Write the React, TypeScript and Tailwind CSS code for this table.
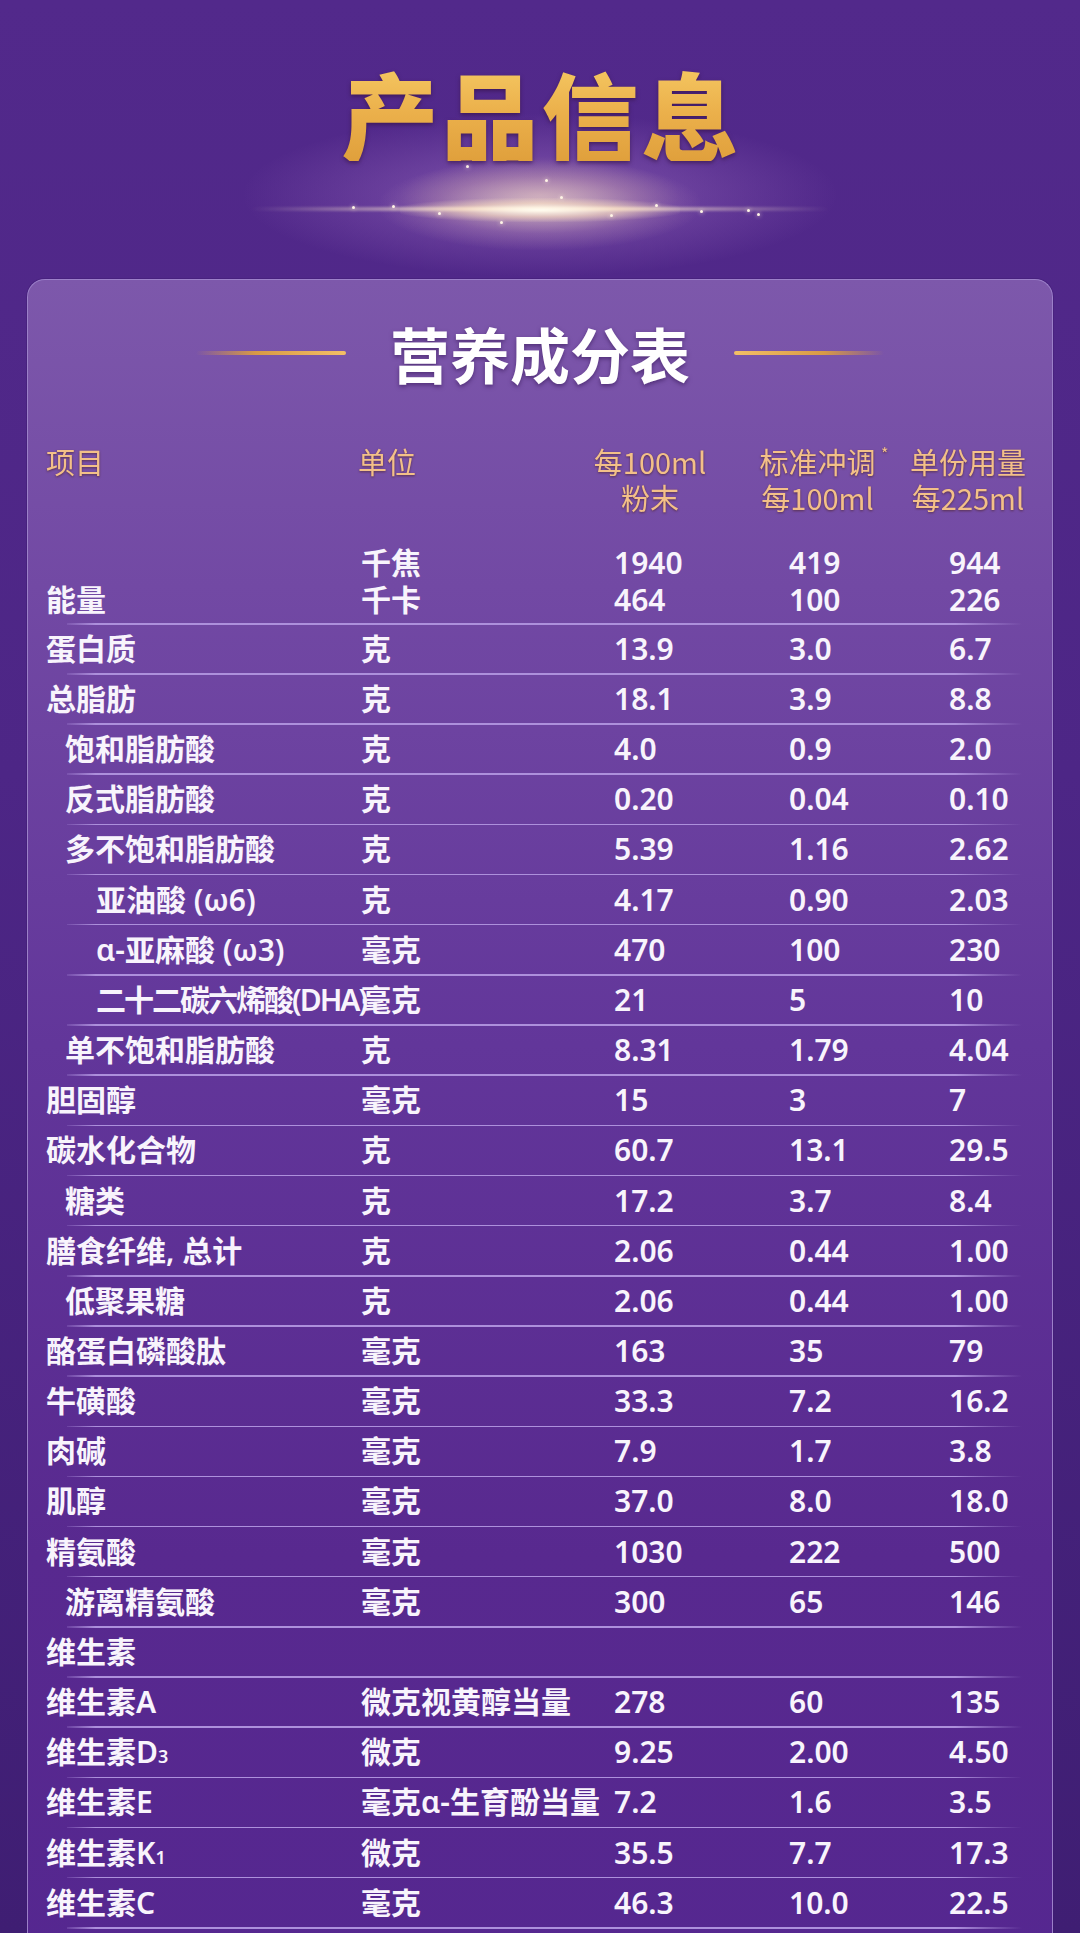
import React from "react";

type Row = {
  name: React.ReactNode;
  level?: 0 | 1 | 2;
  unit?: React.ReactNode;
  a?: string;
  b?: string;
  c?: string;
  tight?: boolean;
};

const rows: Row[] = [
  { name: "蛋白质", unit: "克", a: "13.9", b: "3.0", c: "6.7" },
  { name: "总脂肪", unit: "克", a: "18.1", b: "3.9", c: "8.8" },
  { name: "饱和脂肪酸", level: 1, unit: "克", a: "4.0", b: "0.9", c: "2.0" },
  { name: "反式脂肪酸", level: 1, unit: "克", a: "0.20", b: "0.04", c: "0.10" },
  { name: "多不饱和脂肪酸", level: 1, unit: "克", a: "5.39", b: "1.16", c: "2.62" },
  { name: "亚油酸 (ω6)", level: 2, unit: "克", a: "4.17", b: "0.90", c: "2.03" },
  { name: "α-亚麻酸 (ω3)", level: 2, unit: "毫克", a: "470", b: "100", c: "230" },
  { name: "二十二碳六烯酸(DHA)", level: 2, unit: "毫克", a: "21", b: "5", c: "10", tight: true },
  { name: "单不饱和脂肪酸", level: 1, unit: "克", a: "8.31", b: "1.79", c: "4.04" },
  { name: "胆固醇", unit: "毫克", a: "15", b: "3", c: "7" },
  { name: "碳水化合物", unit: "克", a: "60.7", b: "13.1", c: "29.5" },
  { name: "糖类", level: 1, unit: "克", a: "17.2", b: "3.7", c: "8.4" },
  { name: "膳食纤维, 总计", unit: "克", a: "2.06", b: "0.44", c: "1.00" },
  { name: "低聚果糖", level: 1, unit: "克", a: "2.06", b: "0.44", c: "1.00" },
  { name: "酪蛋白磷酸肽", unit: "毫克", a: "163", b: "35", c: "79" },
  { name: "牛磺酸", unit: "毫克", a: "33.3", b: "7.2", c: "16.2" },
  { name: "肉碱", unit: "毫克", a: "7.9", b: "1.7", c: "3.8" },
  { name: "肌醇", unit: "毫克", a: "37.0", b: "8.0", c: "18.0" },
  { name: "精氨酸", unit: "毫克", a: "1030", b: "222", c: "500" },
  { name: "游离精氨酸", level: 1, unit: "毫克", a: "300", b: "65", c: "146" },
  { name: "维生素" },
  { name: "维生素A", unit: "微克视黄醇当量", a: "278", b: "60", c: "135" },
  {
    name: (
      <>
        维生素D<span className="text-[18px]">3</span>
      </>
    ),
    unit: "微克",
    a: "9.25",
    b: "2.00",
    c: "4.50",
  },
  { name: "维生素E", unit: "毫克α-生育酚当量", a: "7.2", b: "1.6", c: "3.5" },
  {
    name: (
      <>
        维生素K<span className="text-[18px]">1</span>
      </>
    ),
    unit: "微克",
    a: "35.5",
    b: "7.7",
    c: "17.3",
  },
  { name: "维生素C", unit: "毫克", a: "46.3", b: "10.0", c: "22.5" },
];

const indent = ["pl-0", "pl-[19px]", "pl-[50px]"];

// little sparkles around the glow line
const sparkles = [
  { x: 352, y: 206 }, { x: 392, y: 205 }, { x: 438, y: 212 }, { x: 466, y: 165 },
  { x: 500, y: 221 }, { x: 545, y: 179 }, { x: 560, y: 196 }, { x: 610, y: 214 },
  { x: 655, y: 204 }, { x: 700, y: 210 }, { x: 747, y: 209 }, { x: 757, y: 213 },
];

function Divider() {
  return (
    <div className="ml-[21px] mr-[12px] h-[1.5px] bg-[linear-gradient(90deg,rgba(176,146,226,0.2),#ad90dc_3%,#ad90dc_93%,rgba(176,146,226,0))]" />
  );
}

export default function App() {
  return (
    <div
      className="w-[1080px] h-[1933px] overflow-hidden bg-[linear-gradient(180deg,#52298b_0%,#4d2686_40%,#3f1e73_100%)] text-[#f8f4fc]"
      style={{ fontFamily: '"Noto Sans", "Noto Sans CJK SC", sans-serif' }}
    >
      {/* Title */}
      <div className="relative h-[279px] flex flex-col items-center">
        <div className="absolute left-[230px] top-[110px] w-[620px] h-[170px] rounded-full bg-[radial-gradient(ellipse_at_center,rgba(255,215,200,0.5)_0%,rgba(200,150,225,0.22)_32%,rgba(120,70,170,0)_68%)]" />
        <div className="absolute left-[380px] top-[160px] w-[320px] h-[90px] rounded-full bg-[radial-gradient(ellipse_at_center,rgba(255,235,215,0.55)_0%,rgba(240,200,200,0.2)_45%,rgba(200,150,210,0)_72%)]" />
        <div className="absolute left-[250px] top-[207px] w-[580px] h-[4px] rounded-full bg-[linear-gradient(90deg,rgba(255,240,220,0),rgba(255,236,210,0.95)_50%,rgba(255,240,220,0))] blur-[1px]" />
        <div className="absolute left-[400px] top-[198px] w-[280px] h-[24px] rounded-full bg-[radial-gradient(ellipse_at_center,rgba(255,252,240,1)_0%,rgba(255,228,195,0.55)_40%,rgba(255,220,180,0)_75%)]" />
        {sparkles.map((s, i) => (
          <div
            key={i}
            className="absolute w-[3px] h-[3px] rounded-full bg-[#fff4e6] shadow-[0_0_4px_rgba(255,240,220,0.9)]"
            style={{ left: s.x, top: s.y }}
          />
        ))}
        <h1
          className="relative mt-[64px] pl-[3px] text-[97px] leading-none font-black tracking-[3px] bg-[linear-gradient(180deg,#f5c862_0%,#ebb04b_50%,#e0a03c_100%)] bg-clip-text text-transparent drop-shadow-[0_2px_2px_rgba(50,15,60,0.6)]"
          style={{ fontFamily: '"Noto Sans CJK SC", sans-serif' }}
        >
          产品信息
        </h1>
      </div>

      {/* Card */}
      <div className="ml-[27px] w-[1026px] h-[1700px] rounded-t-[18px] border border-b-0 border-[#9c80c9] bg-[linear-gradient(180deg,#7d58ab_0%,#7249a4_18%,#62369a_45%,#58298f_75%,#552790_100%)] px-[18px] shadow-[0_0_0_1px_rgba(60,25,110,0.4)]">
        {/* Card title */}
        <div className="flex items-center justify-center gap-[44px] pt-[43px]">
          <div className="w-[150px] h-[4px] rounded-full bg-[linear-gradient(90deg,rgba(230,170,80,0),#d89a45_40%,#f4bf66)]" />
          <div
            className="text-[60px] leading-none font-bold text-white drop-shadow-[0_2px_2px_rgba(40,10,70,0.5)]"
            style={{ fontFamily: '"Noto Sans CJK SC", sans-serif' }}
          >
            营养成分表
          </div>
          <div className="w-[150px] h-[4px] rounded-full bg-[linear-gradient(90deg,#f4bf66,#d89a45_60%,rgba(230,170,80,0))]" />
        </div>

        {/* Header */}
        <div
          className="mt-[60px] grid grid-cols-[312px_237px_110px_225px_76px] text-[29px] leading-[36px] text-[#f3c088] drop-shadow-[0_1px_1px_rgba(70,30,20,0.6)]"
          style={{ fontFamily: '"Noto Sans CJK SC", sans-serif' }}
        >
          <div>项目</div>
          <div>单位</div>
          <div className="flex flex-col items-center whitespace-nowrap">
            <span>每100ml</span>
            <span>粉末</span>
          </div>
          <div className="flex flex-col items-center whitespace-nowrap">
            <span className="relative">
              标准冲调<span className="absolute -right-[13px] -top-[8px] text-[16px]">*</span>
            </span>
            <span>每100ml</span>
          </div>
          <div className="flex flex-col items-center whitespace-nowrap">
            <span>单份用量</span>
            <span>每225ml</span>
          </div>
        </div>

        {/* Table body */}
        <div className="text-[30px] font-semibold">
          <div className="grid grid-cols-[315px_253px_175px_160px_1fr] pt-[29px] pb-[5px] leading-[37px]">
            <div className="flex flex-col">
              <span>&nbsp;</span>
              <span>能量</span>
            </div>
            <div className="flex flex-col">
              <span>千焦</span>
              <span>千卡</span>
            </div>
            <div className="flex flex-col">
              <span>1940</span>
              <span>464</span>
            </div>
            <div className="flex flex-col">
              <span>419</span>
              <span>100</span>
            </div>
            <div className="flex flex-col">
              <span>944</span>
              <span>226</span>
            </div>
          </div>
          <Divider />
          {rows.map((r, i) => (
            <React.Fragment key={i}>
              <div className="grid grid-cols-[315px_253px_175px_160px_1fr] h-[48.66px] items-center leading-none whitespace-nowrap">
                <div className={`${indent[r.level ?? 0]} ${r.tight ? "tracking-[-2px]" : ""}`}>{r.name}</div>
                <div>{r.unit}</div>
                <div>{r.a}</div>
                <div>{r.b}</div>
                <div>{r.c}</div>
              </div>
              <Divider />
            </React.Fragment>
          ))}
        </div>
      </div>
    </div>
  );
}
